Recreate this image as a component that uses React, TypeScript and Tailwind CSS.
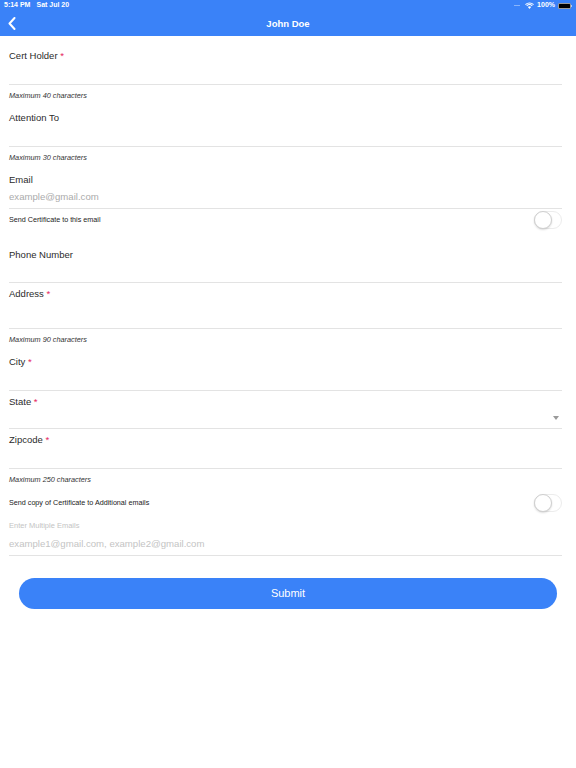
import React from "react";

const font = { fontFamily: '"Liberation Sans", Arial, sans-serif' };

function Req() {
  return <span className="text-[#e5245c]"> *</span>;
}

function Label({ text, required }: { text: string; required?: boolean }) {
  return (
    <div className="text-[9.5px] leading-[11px] text-[#2b2b2b]">
      {text}
      {required && <Req />}
    </div>
  );
}

function Hint({ text, h }: { text: string; h: string }) {
  return (
    <div className={`${h} flex items-center pt-px text-[7.3px] italic text-[#333]`}>
      {text}
    </div>
  );
}

function Toggle() {
  return (
    <div className="relative h-[18px] w-[28px] rounded-full border border-[#ececec] bg-white">
      <div className="absolute -left-px -top-px h-[18px] w-[18px] rounded-full border border-[#cfcfcf] bg-white shadow-[0_1px_2px_rgba(0,0,0,0.15)]" />
    </div>
  );
}

export default function App() {
  return (
    <div className="min-h-[768px] w-[576px] bg-white" style={font}>
      <div className="h-[36px] bg-[#3a82f8] text-white">
        <div className="flex h-[11px] items-center justify-between px-[4px] text-[7px] font-semibold">
          <div className="flex gap-[6px]">
            <span>5:14 PM</span>
            <span>Sat Jul 20</span>
          </div>
          <div className="flex items-center gap-[3px]">
            <span className="mr-[2px] h-[1px] w-[6px] bg-white/40" />
            <svg width="9" height="7" viewBox="0 0 12 9">
              <path d="M6 9 L3.8 6.6 A3 3 0 0 1 8.2 6.6 Z" fill="white" />
              <path d="M2.3 5 A5.4 5.4 0 0 1 9.7 5" stroke="white" strokeWidth="1.4" fill="none" />
              <path d="M0.6 3.2 A8 8 0 0 1 11.4 3.2" stroke="white" strokeWidth="1.4" fill="none" />
            </svg>
            <span>100%</span>
            <div className="flex items-center">
              <div className="h-[6px] w-[13px] rounded-[1.5px] border border-white/60 bg-black p-px" />
              <div className="h-[2px] w-[1px] bg-white/60" />
            </div>
          </div>
        </div>
        <div className="relative flex h-[25px] items-center justify-center pt-px">
          <svg
            className="absolute left-[8px] top-[6px]"
            width="8"
            height="13"
            viewBox="0 0 8 13"
          >
            <path d="M6.5 1 L1.5 6.5 L6.5 12" stroke="white" strokeWidth="2" fill="none" strokeLinecap="round" strokeLinejoin="round" />
          </svg>
          <span className="text-[9.5px] font-semibold">John Doe</span>
        </div>
      </div>

      <div className="pl-[9px] pr-[14px]">
        <div className="h-[49px] border-b border-[#e3e3e3] pt-[14px]">
          <Label text="Cert Holder" required />
        </div>
        <Hint text="Maximum 40 characters" h="h-[22px]" />

        <div className="h-[40px] border-b border-[#e3e3e3] pt-[5px]">
          <Label text="Attention To" />
        </div>
        <Hint text="Maximum 30 characters" h="h-[21px]" />

        <div className="h-[41px] border-b border-[#e3e3e3] pt-[6px]">
          <Label text="Email" />
          <div className="mt-[5px] text-[9.6px] leading-[14px] text-[#ababab]">
            example@gmail.com
          </div>
        </div>
        <div className="flex h-[22px] items-center justify-between">
          <span className="text-[7.2px] text-[#222]">Send Certificate to this email</span>
          <Toggle />
        </div>

        <div className="h-[52px] border-b border-[#e3e3e3] pt-[18px]">
          <Label text="Phone Number" />
        </div>

        <div className="h-[46px] border-b border-[#e3e3e3] pt-[5px]">
          <Label text="Address" required />
        </div>
        <Hint text="Maximum 90 characters" h="h-[22px]" />

        <div className="h-[40px] border-b border-[#e3e3e3] pt-[5px]">
          <Label text="City" required />
        </div>

        <div className="relative h-[38px] border-b border-[#e3e3e3] pt-[5px]">
          <Label text="State" required />
          <svg className="absolute right-[3px] top-[25px]" width="6" height="4" viewBox="0 0 6 4">
            <path d="M0 0 L6 0 L3 4 Z" fill="#9a9a9a" />
          </svg>
        </div>

        <div className="h-[40px] border-b border-[#e3e3e3] pt-[5px]">
          <Label text="Zipcode" required />
        </div>
        <Hint text="Maximum 250 characters" h="h-[22px]" />

        <div className="flex h-[24px] items-center justify-between">
          <span className="text-[7.2px] text-[#222]">
            Send copy of Certificate to Additional emails
          </span>
          <Toggle />
        </div>

        <div className="h-[41px] border-b border-[#e3e3e3] pt-[6px]">
          <div className="text-[7.5px] leading-[10px] text-[#c4c4c4]">
            Enter Multiple Emails
          </div>
          <div className="mt-[6px] text-[9.6px] leading-[14px] text-[#c4c4c4]">
            example1@gmail.com, example2@gmail.com
          </div>
        </div>
      </div>

      <div className="px-[19px] pt-[22px]">
        <button className="flex h-[31px] w-full items-center justify-center rounded-full bg-[#3a82f8] text-[11px] text-white">
          Submit
        </button>
      </div>
    </div>
  );
}
